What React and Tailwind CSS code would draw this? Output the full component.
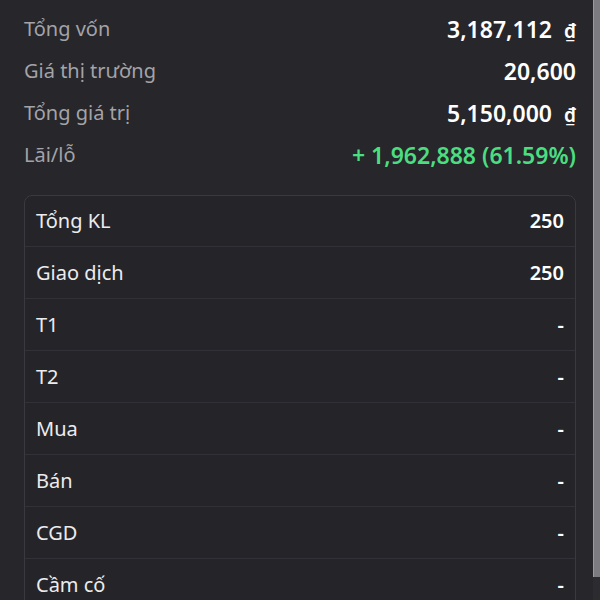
import React from 'react';

const summary = [
  { label: 'Tổng vốn', value: '3,187,112', unit: true },
  { label: 'Giá thị trường', value: '20,600' },
  { label: 'Tổng giá trị', value: '5,150,000', unit: true },
  { label: 'Lãi/lỗ', value: '+ 1,962,888 (61.59%)', green: true },
];

const volumes = [
  { label: 'Tổng KL', value: '250' },
  { label: 'Giao dịch', value: '250' },
  { label: 'T1', value: '-' },
  { label: 'T2', value: '-' },
  { label: 'Mua', value: '-' },
  { label: 'Bán', value: '-' },
  { label: 'CGD', value: '-' },
  { label: 'Cầm cố', value: '-' },
];

export default function App() {
  return (
    <div className="relative h-[600px] overflow-hidden bg-[#27262b] font-['Noto_Sans',sans-serif]">
      <div className="px-6 pt-2">
        {/* Summary */}
        <div className="flex flex-col">
          {summary.map((row) => (
            <div key={row.label} className="flex h-[42px] items-center justify-between">
              <span className="text-[20px] text-[#a3a3a8]">{row.label}</span>
              <span
                className={
                  'text-[23px] font-semibold ' +
                  (row.green ? 'text-[#4ade80]' : 'text-white')
                }
              >
                {row.value}
                {row.unit && <span className="ml-[12px] text-[19px]">₫</span>}
              </span>
            </div>
          ))}
        </div>

        {/* Volume card */}
        <div className="mt-[19px] rounded-lg border border-[#3a393f] bg-[#252429]">
          {volumes.map((row, i) => (
            <div
              key={row.label}
              className={
                'flex items-center justify-between px-[11px] ' +
                (i > 0 ? 'h-[52px] border-t border-[#323137]' : 'h-[50px]')
              }
            >
              <span className="text-[20px] text-[#ececee]">{row.label}</span>
              <span className="text-[20px] font-semibold text-white">{row.value}</span>
            </div>
          ))}
        </div>
      </div>

      {/* Scrollbar */}
      <div className="absolute right-0 top-0 h-full w-[7px] bg-[#2c2b30]">
        <div className="h-[577px] w-full border-l border-[#9a999e] bg-[#7c7b80]" />
      </div>
    </div>
  );
}
